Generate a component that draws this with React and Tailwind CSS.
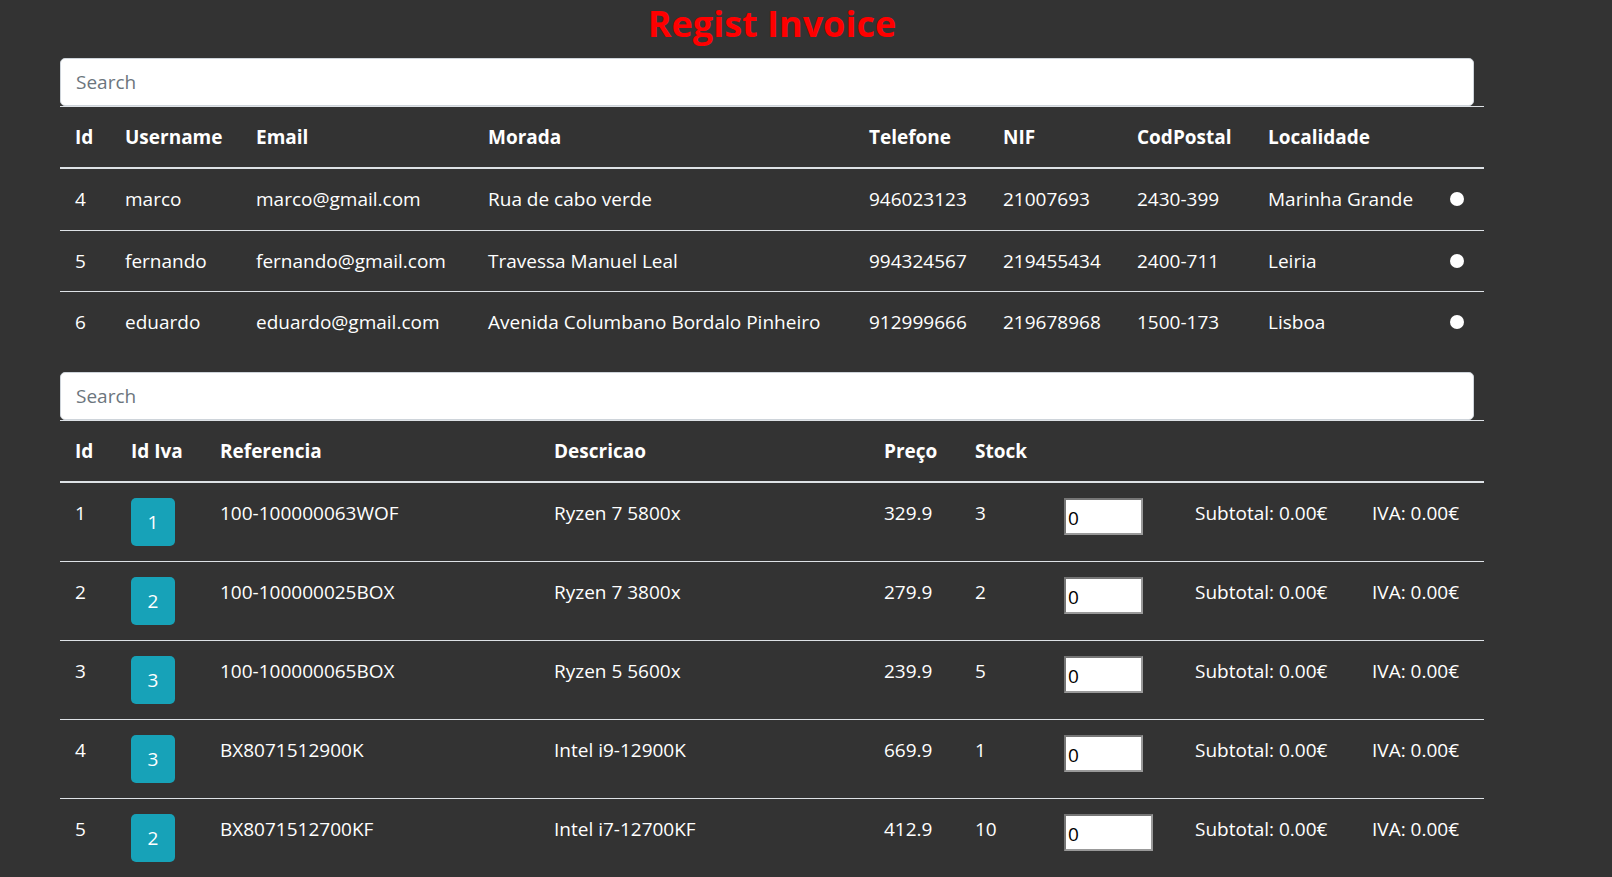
import React from "react";

const users = [
  { id: 4, username: "marco", email: "marco@gmail.com", morada: "Rua de cabo verde", tel: "946023123", nif: "21007693", cp: "2430-399", loc: "Marinha Grande" },
  { id: 5, username: "fernando", email: "fernando@gmail.com", morada: "Travessa Manuel Leal", tel: "994324567", nif: "219455434", cp: "2400-711", loc: "Leiria" },
  { id: 6, username: "eduardo", email: "eduardo@gmail.com", morada: "Avenida Columbano Bordalo Pinheiro", tel: "912999666", nif: "219678968", cp: "1500-173", loc: "Lisboa" },
];

const products = [
  { id: 1, iva: 1, ref: "100-100000063WOF", desc: "Ryzen 7 5800x", preco: "329.9", stock: "3", wide: false },
  { id: 2, iva: 2, ref: "100-100000025BOX", desc: "Ryzen 7 3800x", preco: "279.9", stock: "2", wide: false },
  { id: 3, iva: 3, ref: "100-100000065BOX", desc: "Ryzen 5 5600x", preco: "239.9", stock: "5", wide: false },
  { id: 4, iva: 3, ref: "BX8071512900K", desc: "Intel i9-12900K", preco: "669.9", stock: "1", wide: false },
  { id: 5, iva: 2, ref: "BX8071512700KF", desc: "Intel i7-12700KF", preco: "412.9", stock: "10", wide: true },
];

function Search() {
  return (
    <div className="w-[1414px] h-[48px] bg-white rounded-[5px] border border-[#ced4da] flex items-center px-[15px]">
      <span className="text-[19px] text-[#6c757d] leading-[30px]">Search</span>
    </div>
  );
}

const th = "px-[15px] pt-[15px] pb-[15px] text-left align-top font-bold text-[19px] leading-[30px] border-t border-b-2 border-[#dee2e6]";
const td = "px-[15px] pt-[15px] pb-[15.5px] align-top text-[19px] leading-[30px]";
const tdp = "px-[15px] py-[15px] align-top text-[19px] leading-[30px]";

export default function App() {
  return (
    <div className="min-h-[877px] w-full bg-[#333333] text-white overflow-hidden" style={{ fontFamily: '"Open Sans", "Noto Sans", sans-serif' }}>
      <div className="pl-[60px] w-[1484px]">
        <h1 className="text-center text-[36px] leading-[48px] font-bold text-[#ff0000] mb-[10px]">Regist Invoice</h1>
        <Search />
        <table className="w-[1424px] table-fixed border-collapse mb-[19px]">
          <colgroup>
            <col className="w-[50px]" />
            <col className="w-[131px]" />
            <col className="w-[232px]" />
            <col className="w-[381px]" />
            <col className="w-[134px]" />
            <col className="w-[134px]" />
            <col className="w-[131px]" />
            <col className="w-[172px]" />
            <col className="w-[59px]" />
          </colgroup>
          <thead>
            <tr>
              <th className={th}>Id</th>
              <th className={th}>Username</th>
              <th className={th}>Email</th>
              <th className={th}>Morada</th>
              <th className={th}>Telefone</th>
              <th className={th}>NIF</th>
              <th className={th}>CodPostal</th>
              <th className={th}>Localidade</th>
              <th className={th}></th>
            </tr>
          </thead>
          <tbody>
            {users.map((u, i) => (
              <tr key={u.id} className={i === 0 ? "" : "border-t border-[#dee2e6]"}>
                <td className={td}>{u.id}</td>
                <td className={td}>{u.username}</td>
                <td className={td}>{u.email}</td>
                <td className={td + " whitespace-nowrap"}>{u.morada}</td>
                <td className={td}>{u.tel}</td>
                <td className={td}>{u.nif}</td>
                <td className={td}>{u.cp}</td>
                <td className={td + " whitespace-nowrap"}>{u.loc}</td>
                <td className="pl-[25px] pr-0 pt-[15px] pb-[15.5px] align-top">
                  <div className="h-[30px] flex items-center">
                    <span className="block shrink-0 w-[14px] h-[14px] rounded-full bg-white" />
                  </div>
                </td>
              </tr>
            ))}
          </tbody>
        </table>
        <Search />
        <table className="w-[1424px] table-fixed border-collapse">
          <colgroup>
            <col className="w-[56px]" />
            <col className="w-[89px]" />
            <col className="w-[334px]" />
            <col className="w-[330px]" />
            <col className="w-[91px]" />
            <col className="w-[89px]" />
            <col className="w-[131px]" />
            <col className="w-[177px]" />
            <col className="w-[127px]" />
          </colgroup>
          <thead>
            <tr>
              <th className={th}>Id</th>
              <th className={th}>Id Iva</th>
              <th className={th}>Referencia</th>
              <th className={th}>Descricao</th>
              <th className={th}>Preço</th>
              <th className={th}>Stock</th>
              <th className={th}></th>
              <th className={th}></th>
              <th className={th}></th>
            </tr>
          </thead>
          <tbody>
            {products.map((p, i) => (
              <tr key={p.id} className={i === 0 ? "" : "border-t border-[#dee2e6]"}>
                <td className={tdp}>{p.id}</td>
                <td className={tdp}>
                  <div className="w-[44px] h-[48px] rounded-[5px] bg-[#17a2b8] flex items-center justify-center text-white text-[19px] leading-[30px]">
                    {p.iva}
                  </div>
                </td>
                <td className={tdp + " whitespace-nowrap"}>{p.ref}</td>
                <td className={tdp + " whitespace-nowrap"}>{p.desc}</td>
                <td className={tdp}>{p.preco}</td>
                <td className={tdp}>{p.stock}</td>
                <td className={tdp}>
                  <div className={(p.wide ? "w-[89px]" : "w-[79px]") + " h-[37px] bg-white border-2 border-t-[#767676] border-l-[#767676] border-r-[#999] border-b-[#999] flex items-center pl-[2px] pt-[4px]"}>
                    <span className="text-black text-[19px] leading-[30px]">0</span>
                  </div>
                </td>
                <td className={tdp + " whitespace-nowrap"}>Subtotal: 0.00€</td>
                <td className={tdp + " whitespace-nowrap"}>IVA: 0.00€</td>
              </tr>
            ))}
          </tbody>
        </table>
      </div>
    </div>
  );
}
